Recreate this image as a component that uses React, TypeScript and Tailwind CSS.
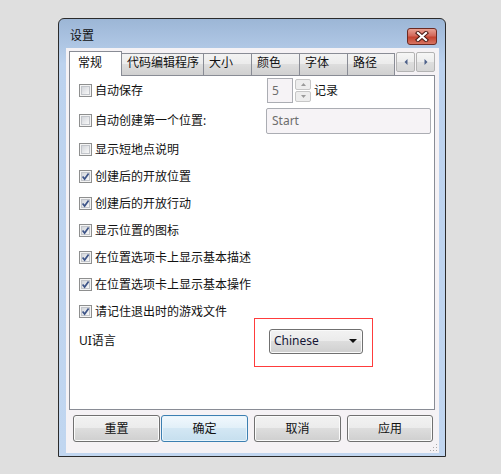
import React from "react";

const items: { label: string; checked: boolean }[] = [
  { label: "显示短地点说明", checked: false },
  { label: "创建后的开放位置", checked: true },
  { label: "创建后的开放行动", checked: true },
  { label: "显示位置的图标", checked: true },
  { label: "在位置选项卡上显示基本描述", checked: true },
  { label: "在位置选项卡上显示基本操作", checked: true },
  { label: "请记住退出时的游戏文件", checked: true },
];

function CheckBox({ checked }: { checked?: boolean }) {
  return (
    <span className="relative flex h-[13px] w-[13px] shrink-0 items-center justify-center border border-[#8e8f8f] bg-[#f4f4f4]">
      <span className="h-[9px] w-[9px] border border-[#c2c5ca] bg-[linear-gradient(135deg,#d3d6db,#f8f8f8)]" />
      {checked && (
        <svg className="absolute left-[1px] top-[1px]" width="9" height="9" viewBox="0 0 9 9">
          <path d="M1.6 4.4 L3.6 7 L7.6 1.4" fill="none" stroke="#3d5488" strokeWidth="1.7" />
        </svg>
      )}
    </span>
  );
}

function Check({ label, checked }: { label: string; checked?: boolean }) {
  return (
    <div className="flex w-[187px] items-center gap-[3px]">
      <CheckBox checked={checked} />
      <span className="whitespace-nowrap leading-[16px]">{label}</span>
    </div>
  );
}

function Tab({ label, width, selected }: { label: string; width: string; selected?: boolean }) {
  if (selected) {
    return (
      <div className={`relative z-10 mb-[-1px] h-[25px] ${width} border border-b-0 border-[#898c95] bg-white pl-[8px] pt-[3px] leading-[16px]`}>
        {label}
      </div>
    );
  }
  return (
    <div className={`-ml-px h-[22px] ${width} border border-b-0 border-[#898c95] bg-[linear-gradient(#f3f3f3,#ebebeb_50%,#dddddd_50%,#d0d0d0)] pl-[5px] pt-[1px] leading-[16px] whitespace-nowrap`}>
      {label}
    </div>
  );
}

function ScrollBtn({ dir }: { dir: "l" | "r" }) {
  return (
    <div className="ml-px mt-px flex h-[20px] w-[19px] items-center justify-center self-start rounded-[2px] border border-[#b3b3b3] bg-[linear-gradient(#f6f6f6,#ececec_50%,#dedede_50%,#d6d6d6)]">
      <svg width="4" height="6" viewBox="0 0 4 6">
        <path d={dir === "l" ? "M3.5 0 L0.5 3 L3.5 6 Z" : "M0.5 0 L3.5 3 L0.5 6 Z"} fill="#4d6089" />
      </svg>
    </div>
  );
}

function Button({ label, def, extra }: { label: string; def?: boolean; extra: string }) {
  return (
    <div
      className={`flex h-[27px] items-center justify-center rounded-[3px] border ${extra} ${
        def
          ? "border-[#3c7fb1] bg-[linear-gradient(#f1f8fd,#e1eff8_50%,#d3e7f4_50%,#c6dfee)] shadow-[inset_0_0_0_1px_#e9f5fc]"
          : "border-[#707070] bg-[linear-gradient(#f2f2f2,#ebebeb_50%,#dddddd_50%,#cfcfcf)] shadow-[inset_0_0_0_1px_#fbfbfb]"
      }`}
    >
      {label}
    </div>
  );
}

export default function App() {
  return (
    <div className="h-[474px] w-[501px] bg-[#dfdfdf] pl-[58px] pt-[18px] font-['Noto_Sans','Noto_Sans_CJK_SC',sans-serif] text-[12px] text-[#111]">
      <div className="flex h-[439px] w-[388px] flex-col rounded-t-[6px] border border-[#2b2b2b] bg-[linear-gradient(#9cb6d6,#bcd2ee_45px,#c1d6f0)]">
        {/* title bar */}
        <div className="flex h-[29px] items-start justify-between">
          <span className="pl-[11px] pt-[9px] leading-[16px]">设置</span>
          <div className="mr-[8px] mt-[9px] flex h-[17px] w-[30px] items-center justify-center rounded-[3px] border border-[#6b2a22] bg-[linear-gradient(#e8a193,#d2685a_45%,#c4432f_55%,#d77462)]">
            <svg width="14" height="11" viewBox="0 0 14 11">
              <path d="M3 2 L11 9 M11 2 L3 9" stroke="#4a1a14" strokeWidth="4.2" strokeLinecap="square" />
              <path d="M3 2 L11 9 M11 2 L3 9" stroke="#ffffff" strokeWidth="2.2" strokeLinecap="square" />
            </svg>
          </div>
        </div>

        {/* client area */}
        <div className="relative ml-[7px] flex h-[405px] w-[373px] flex-col bg-[#f5f2f5] pl-[3px] pt-[3px]">
          <div className="flex h-[24px] items-end">
            <Tab label="常规" width="w-[53px]" selected />
            <Tab label="代码编辑程序" width="w-[83px]" />
            <Tab label="大小" width="w-[49px]" />
            <Tab label="颜色" width="w-[49px]" />
            <Tab label="字体" width="w-[49px]" />
            <Tab label="路径" width="w-[48px]" />
            <ScrollBtn dir="l" />
            <ScrollBtn dir="r" />
          </div>

          <div className="flex h-[335px] w-[366px] flex-col border border-[#898c95] bg-white pl-[9px]">
            <div className="flex h-[29px] items-center">
              <Check label="自动保存" />
              <div className="ml-px flex h-[25px] w-[26px] items-center border border-[#abadb3] bg-[#f6f3f6] pl-[4px] text-[#6d6d6d]">
                5
              </div>
              <div className="ml-[2px] flex w-[16px] flex-col gap-px">
                <div className="flex h-[11px] items-center justify-center rounded-[2px] border border-[#c6c6c6] bg-[#ededed]">
                  <svg width="5" height="3" viewBox="0 0 5 3"><path d="M0 3 L2.5 0 L5 3 Z" fill="#9a9a9a" /></svg>
                </div>
                <div className="flex h-[11px] items-center justify-center rounded-[2px] border border-[#c6c6c6] bg-[#ededed]">
                  <svg width="5" height="3" viewBox="0 0 5 3"><path d="M0 0 L2.5 3 L5 0 Z" fill="#9a9a9a" /></svg>
                </div>
              </div>
              <span className="ml-[3px] leading-[16px]">记录</span>
            </div>

            <div className="flex h-[31px] items-center">
              <Check label="自动创建第一个位置:" />
              <div className="flex h-[26px] w-[165px] items-center rounded-[2px] border border-[#abadb3] bg-[#f6f3f6] pl-[5px] text-[#6d6d6d]">
                Start
              </div>
            </div>

            {items.map((it) => (
              <div key={it.label} className="flex h-[27px] items-center">
                <Check label={it.label} checked={it.checked} />
              </div>
            ))}

            <div className="flex h-[32px] items-center">
              <span className="w-[190px] leading-[16px]">UI语言</span>
              <div className="relative flex h-[25px] w-[94px] items-center justify-between rounded-[3px] border border-[#707070] bg-[linear-gradient(#f2f2f2,#ebebeb_50%,#dddddd_50%,#cfcfcf)] pl-[4px] pr-[5px] text-[#151535] shadow-[inset_0_0_0_1px_#fafafa]">
                <span>Chinese</span>
                <svg width="8" height="4" viewBox="0 0 8 4"><path d="M0 0 L8 0 L4 4 Z" fill="#111" /></svg>
                <span className="pointer-events-none absolute left-[-16px] top-[-12px] h-[49px] w-[119px] border border-[#ff3c3c]" />
              </div>
            </div>
          </div>

          <div className="ml-[4px] mt-[5px] flex">
            <Button label="重置" extra="w-[87px]" />
            <Button label="确定" def extra="ml-[1px] w-[87px]" />
            <Button label="取消" extra="ml-[6px] w-[87px]" />
            <Button label="应用" extra="ml-[6px] w-[86px]" />
          </div>

          <svg className="absolute bottom-[1px] right-[1px]" width="9" height="9" viewBox="0 0 9 9">
            <rect x="7" y="1" width="1" height="1" fill="#a9a9a9" />
            <rect x="4" y="4" width="1" height="1" fill="#a9a9a9" />
            <rect x="7" y="4" width="1" height="1" fill="#a9a9a9" />
            <rect x="1" y="7" width="1" height="1" fill="#a9a9a9" />
            <rect x="4" y="7" width="1" height="1" fill="#a9a9a9" />
            <rect x="7" y="7" width="1" height="1" fill="#a9a9a9" />
          </svg>
        </div>
      </div>
    </div>
  );
}
